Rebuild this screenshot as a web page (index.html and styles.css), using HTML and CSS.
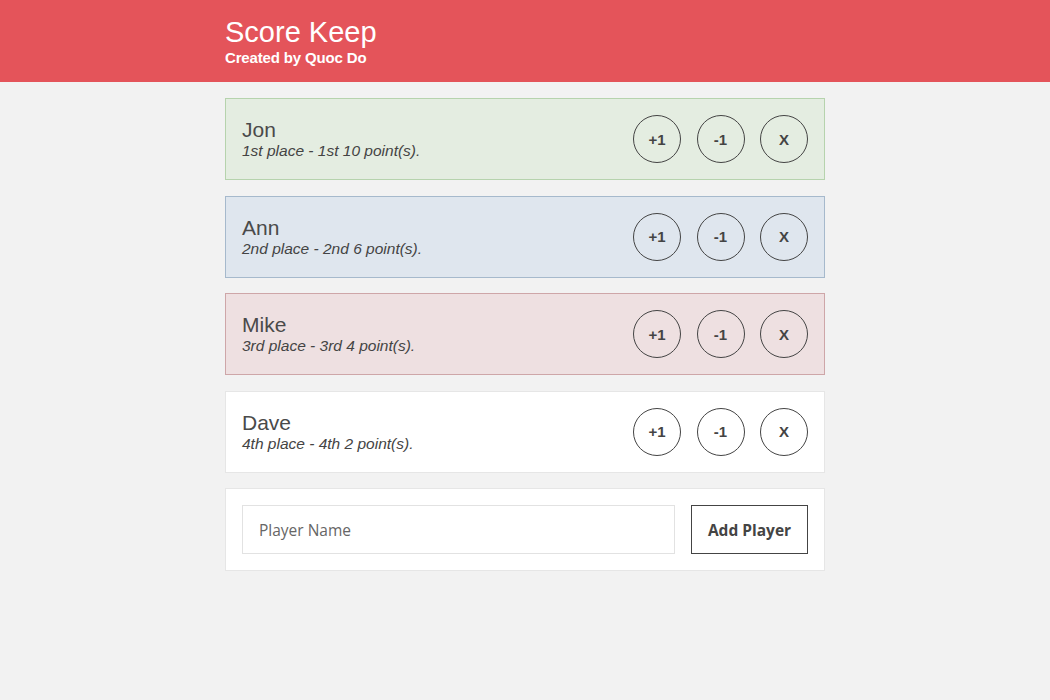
FILE: index.html
```html
<!DOCTYPE html>
<html>
<head>
<meta charset="utf-8">
<title>Score Keep</title>
<link rel="stylesheet" href="styles.css">
</head>
<body>
<header class="header">
  <div class="wrapper">
    <h1 class="header-title">Score Keep</h1>
    <h2 class="header-subtitle">Created by Quoc Do</h2>
  </div>
</header>
<main class="wrapper main">
  <div class="item item-first">
    <div class="player-stats">
      <h3 class="player-name">Jon</h3>
      <p class="player-info">1st place - 1st 10 point(s).</p>
    </div>
    <div class="player-actions">
      <button class="round-btn">+1</button>
      <button class="round-btn">-1</button>
      <button class="round-btn">X</button>
    </div>
  </div>
  <div class="item item-second">
    <div class="player-stats">
      <h3 class="player-name">Ann</h3>
      <p class="player-info">2nd place - 2nd 6 point(s).</p>
    </div>
    <div class="player-actions">
      <button class="round-btn">+1</button>
      <button class="round-btn">-1</button>
      <button class="round-btn">X</button>
    </div>
  </div>
  <div class="item item-third">
    <div class="player-stats">
      <h3 class="player-name">Mike</h3>
      <p class="player-info">3rd place - 3rd 4 point(s).</p>
    </div>
    <div class="player-actions">
      <button class="round-btn">+1</button>
      <button class="round-btn">-1</button>
      <button class="round-btn">X</button>
    </div>
  </div>
  <div class="item">
    <div class="player-stats">
      <h3 class="player-name">Dave</h3>
      <p class="player-info">4th place - 4th 2 point(s).</p>
    </div>
    <div class="player-actions">
      <button class="round-btn">+1</button>
      <button class="round-btn">-1</button>
      <button class="round-btn">X</button>
    </div>
  </div>
  <form class="item add-form">
    <input class="form-input" type="text" placeholder="Player Name">
    <button class="add-btn" type="button">Add Player</button>
  </form>
</main>
</body>
</html>
```
FILE: styles.css
```css
* { box-sizing: border-box; }
html, body {
  margin: 0;
  padding: 0;
  background: #f2f2f2;
  font-family: "Liberation Sans", Arial, sans-serif;
  color: #444;
}
.wrapper {
  width: 600px;
  margin: 0 auto;
}
.header {
  background: #e4545a;
  color: #fff;
  height: 82px;
  padding-top: 15px;
}
.header-title {
  margin: 0;
  font-size: 29px;
  font-weight: 400;
  line-height: 34px;
}
.header-subtitle {
  margin: 0;
  font-size: 15px;
  font-weight: 700;
  line-height: 18px;
  letter-spacing: -0.15px;
}
.main {
  padding-top: 16px;
  display: flex;
  flex-direction: column;
  gap: 15.5px;
}
.item {
  background: #fff;
  border: 1px solid #e6e6e6;
  padding: 16px;
  display: flex;
  align-items: center;
  justify-content: space-between;
}
.item-first { background: #e4ede1; border-color: #b6d3ad; }
.item-second { background: #dfe6ee; border-color: #a6b9cc; }
.item-third { background: #eee0e1; border-color: #cea6a8; }
.player-name {
  margin: 0;
  font-size: 21px;
  font-weight: 400;
  line-height: 23px;
  color: #4a4a4a;
}
.player-info {
  margin: 0;
  font-size: 15.5px;
  font-style: italic;
  line-height: 19px;
  color: #444;
}
.player-actions {
  display: flex;
  gap: 15.5px;
}
.round-btn {
  width: 48px;
  height: 48px;
  border-radius: 50%;
  border: 1px solid #444;
  background: transparent;
  font-family: "Liberation Sans", Arial, sans-serif;
  font-weight: 700;
  font-size: 15px;
  color: #444;
  padding: 0;
}
.add-form {
  gap: 16px;
  padding: 16px;
}
.form-input {
  flex: 1;
  height: 49px;
  border: 1px solid #e2e2e2;
  padding: 0 16px;
  font-family: "Open Sans", sans-serif;
  font-size: 15.5px;
  color: #555;
  background: #fff;
  outline: none;
}
.form-input::placeholder { color: #666; }
.add-btn {
  height: 49px;
  width: 117px;
  border: 1px solid #444;
  background: #fff;
  font-family: "Open Sans", sans-serif;
  font-weight: 700;
  font-size: 15.5px;
  color: #444;
  padding: 0;
}
```
